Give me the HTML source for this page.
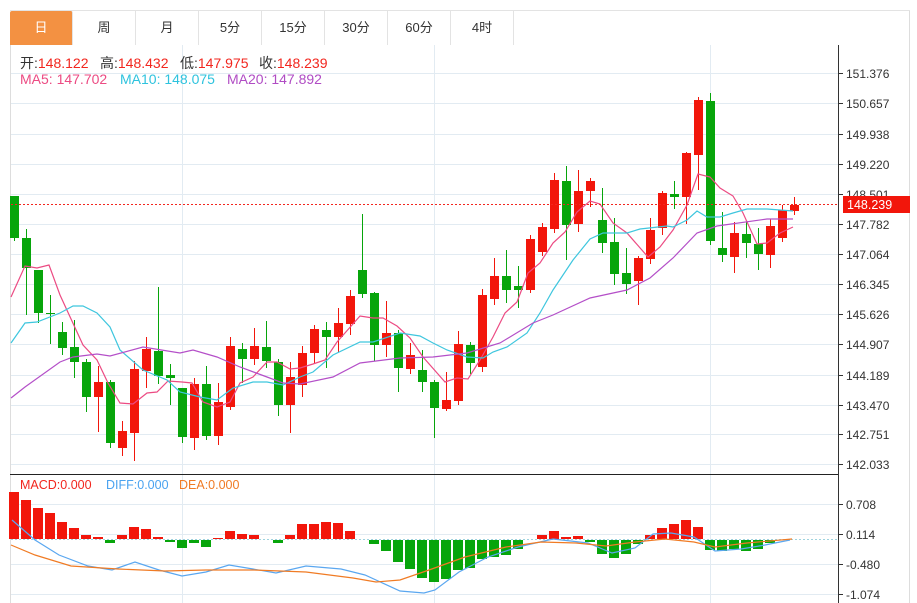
<!DOCTYPE html>
<html><head><meta charset="utf-8">
<style>
html,body{margin:0;padding:0;background:#fff;width:917px;height:603px;overflow:hidden;font-family:"Liberation Sans","Noto Sans CJK SC",sans-serif}
.tabs{position:absolute;left:10px;top:10px;height:35px;width:900px;border-top:1px solid #e3e3e3;box-sizing:border-box}
.tab{position:absolute;top:0;height:34px;width:63px;border-right:1px solid #e3e3e3;box-sizing:border-box;text-align:center;line-height:34px;font-size:13px;color:#333}
.tab.on{background:#f39142;color:#fff;border-radius:2px 2px 0 0}
.i{position:absolute;font-size:14px;white-space:nowrap}
.m{position:absolute;font-size:12.5px;white-space:nowrap;top:478px}
svg{position:absolute;left:0;top:0}
</style></head><body>
<svg id="s" width="917" height="603" xmlns="http://www.w3.org/2000/svg"></svg>
<div class="tabs">
<div class="tab on" style="left:0">日</div>
<div class="tab" style="left:63px">周</div>
<div class="tab" style="left:126px">月</div>
<div class="tab" style="left:189px">5分</div>
<div class="tab" style="left:252px">15分</div>
<div class="tab" style="left:315px">30分</div>
<div class="tab" style="left:378px">60分</div>
<div class="tab" style="left:441px">4时</div>
</div>
<div class="i" style="top:53px;left:20px;color:#333">开:<span style="color:#f2261e">148.122</span></div>
<div class="i" style="top:53px;left:100px;color:#333">高:<span style="color:#f2261e">148.432</span></div>
<div class="i" style="top:53px;left:180px;color:#333">低:<span style="color:#f2261e">147.975</span></div>
<div class="i" style="top:53px;left:259px;color:#333">收:<span style="color:#f2261e">148.239</span></div>
<div class="i" style="top:71px;left:20px;color:#ec4b83">MA5: 147.702</div>
<div class="i" style="top:71px;left:120px;color:#2ec3de">MA10: 148.075</div>
<div class="i" style="top:71px;left:227px;color:#b04cc4">MA20: 147.892</div>
<div class="m" style="left:20px;color:#f2261e">MACD:0.000</div>
<div class="m" style="left:106px;color:#4aa3f0">DIFF:0.000</div>
<div class="m" style="left:179px;color:#f07b24">DEA:0.000</div>
<script>
var s='';
function L(x1,y1,x2,y2,c,w,extra){s+='<line x1="'+x1+'" y1="'+y1+'" x2="'+x2+'" y2="'+y2+'" stroke="'+c+'" stroke-width="'+(w||1)+'" '+(extra||'')+'/>';}
function R(x,y,w,h,c){s+='<rect x="'+x+'" y="'+y+'" width="'+w+'" height="'+h+'" fill="'+c+'"/>';}
function T(x,y,t,c,fs){s+='<text x="'+x+'" y="'+y+'" fill="'+(c||'#333')+'" font-size="'+(fs||12)+'" font-family="Liberation Sans, sans-serif">'+t+'</text>';}
L(10.5,45,10.5,603,'#ddd');L(909.5,10,909.5,603,'#ddd');
var gy=[73,103,134,164,194,224,254,284,314,344,375,405,434,464];
var gl=['151.376','150.657','149.938','149.220','148.501','147.782','147.064','146.345','145.626','144.907','144.189','143.470','142.751','142.033'];
for(var i=0;i<gy.length;i++){L(11,gy[i]+.5,838,gy[i]+.5,'#e2ebf2');L(838,gy[i]+.5,843,gy[i]+.5,'#333');T(846,gy[i]+5,gl[i]);}
[182,434,710].forEach(function(x){L(x+.5,45,x+.5,603,'#e2ebf2');});
var my=[504,534,564,594],ml=['0.708','0.114','-0.480','-1.074'];
for(i=0;i<4;i++){L(11,my[i]+.5,838,my[i]+.5,'#e2ebf2');L(838,my[i]+.5,843,my[i]+.5,'#333');T(846,my[i]+5,ml[i]);}
L(838.5,45,838.5,603,'#333');L(10,474.5,838,474.5,'#222');
var C=[['G',196,238,196,241],['G',238,268,229,315],['G',270,313,313,323],['G',313,314,295,344],['G',332,348,322,355],['G',347,362,320,378],['G',362,397,359,412],['R',382,397,366,432],['G',382,443,380,448],['R',431,448,421,456],['R',369,433,361,461],['R',349,371,337,388],['G',351,376,287,384],['G',375,378,364,405],['G',388,437,388,443],['R',384,438,378,450],['G',384,436,366,440],['R',402,436,383,445],['R',346,407,337,410],['G',349,359,343,383],['R',346,359,328,365],['G',347,361,321,368],['G',362,405,359,416],['R',377,405,362,433],['R',353,385,346,397],['R',329,353,325,364],['G',330,337,322,368],['R',323,337,308,352],['R',296,324,290,335],['G',270,294,214,298],['G',293,345,292,361],['R',333,345,301,357],['G',333,368,330,392],['R',355,369,343,374],['G',370,382,350,392],['G',382,408,380,438],['R',400,409,372,411],['R',344,401,331,405],['G',345,363,342,374],['R',295,367,289,372],['R',276,299,258,305],['G',276,290,250,303],['G',286,290,266,308],['R',239,290,235,293],['R',227,252,223,256],['R',180,229,173,233],['G',181,225,166,260],['R',191,224,170,232],['R',181,191,178,207],['G',220,243,188,253],['G',242,274,218,285],['G',273,284,248,294],['R',258,281,256,305],['R',230,259,218,264],['R',193,228,191,235],['G',194,197,181,209],['R',153,197,152,224],['R',100,155,97,190],['G',101,241,93,245],['G',248,255,212,262],['R',233,257,222,273],['G',234,243,222,258],['G',244,254,228,270],['R',226,255,219,268],['R',210,238,205,242],['R',205,211,197,215]];
C.forEach(function(c,i){var x=14+i*12,col=c[0]=='R'?'#f2160b':'#07a50b';L(x+.5,c[3],x+.5,c[4],col);R(x-4,c[1],9,Math.max(1,c[2]-c[1]),col);});
function P(pts,c){s+='<polyline fill="none" stroke="'+c+'" stroke-width="1.2" points="'+pts+'"/>';}
P('11,297 25,266 37,268 49,265 60,295 83,345 97,360 108,383 120,403 133,404 147,393 157,392 168,381 182,382 192,383 203,402 217,407 230,402 240,383 253,377 267,362 277,362 290,369 300,368 313,364 325,360 337,342 360,316 373,318 383,318 397,326 410,338 423,357 445,382 457,378 468,379 480,360 493,337 505,313 517,302 528,273 540,263 553,243 565,232 577,212 590,201 600,204 613,223 627,233 648,257 660,247 673,230 687,205 698,174 710,177 720,188 733,196 743,213 757,244 767,243 780,233 793,227','#ec4b83');
P('11,343 25,323 37,322 60,313 73,306 83,306 97,313 110,327 120,350 143,370 167,380 180,392 200,397 217,400 233,388 253,382 267,382 283,385 300,377 313,372 333,355 360,342 373,342 400,333 420,336 433,343 447,350 467,357 483,358 493,352 507,347 527,333 540,313 553,290 573,260 590,239 603,233 627,233 640,229 667,226 673,227 687,220 697,211 707,217 720,217 733,213 747,209 767,209 793,211','#3ec6de');
P('11,398 25,387 60,362 73,357 97,354 110,356 143,347 180,353 193,350 217,357 240,367 267,377 283,383 300,384 333,377 360,363 400,358 433,357 467,353 500,343 533,323 553,315 590,298 627,290 650,278 673,258 697,233 717,226 767,219 793,219','#b44fc8');
L(11,204.5,838,204.5,'#f2261e',1,'stroke-dasharray="2,2"');
R(843,196,67,17,'#f2160b');T(847,209,'148.239','#fff',12.5);
L(11,539.5,838,539.5,'#9fd3de',1,'stroke-dasharray="2,2"');
var H=[492,500,508,513,522,528,535,537,-543,535,527,529,537,-542,-548,-543,-547,538,531,534,535,0,-543,535,524,524,522,523,531,0,-544,-551,-562,-569,-578,-582,-579,-570,-568,-559,-557,-555,-549,0,535,531,537,536,-542,-554,-558,-554,-544,535,528,524,520,527,-550,-551,-549,-551,-549,-543,0];
H.forEach(function(h,i){var x=14+i*12;if(h>0)R(x-5,h,10,539-h,'#f2160b');else if(h<0)R(x-5,540,10,-h-540,'#07a50b');});
P('12,520 35,540 59,555 88,566 112,570 135,562 159,570 182,576 206,572 229,565 253,569 276,573 306,566 341,569 365,575 400,591 424,593 435,590 459,572 488,557 518,547 553,539 588,543 612,553 635,548 653,534 671,533 694,537 715,551 741,549 765,545 790,540','#5aa7f0');
P('11,545 35,555 71,566 118,569 165,571 206,570 253,570 306,572 353,578 376,582 400,580 429,570 465,557 506,547 541,542 576,543 606,546 635,542 665,539 694,542 715,547 747,543 792,539','#f07b24');
document.getElementById('s').innerHTML=s;
</script>
</body></html>
